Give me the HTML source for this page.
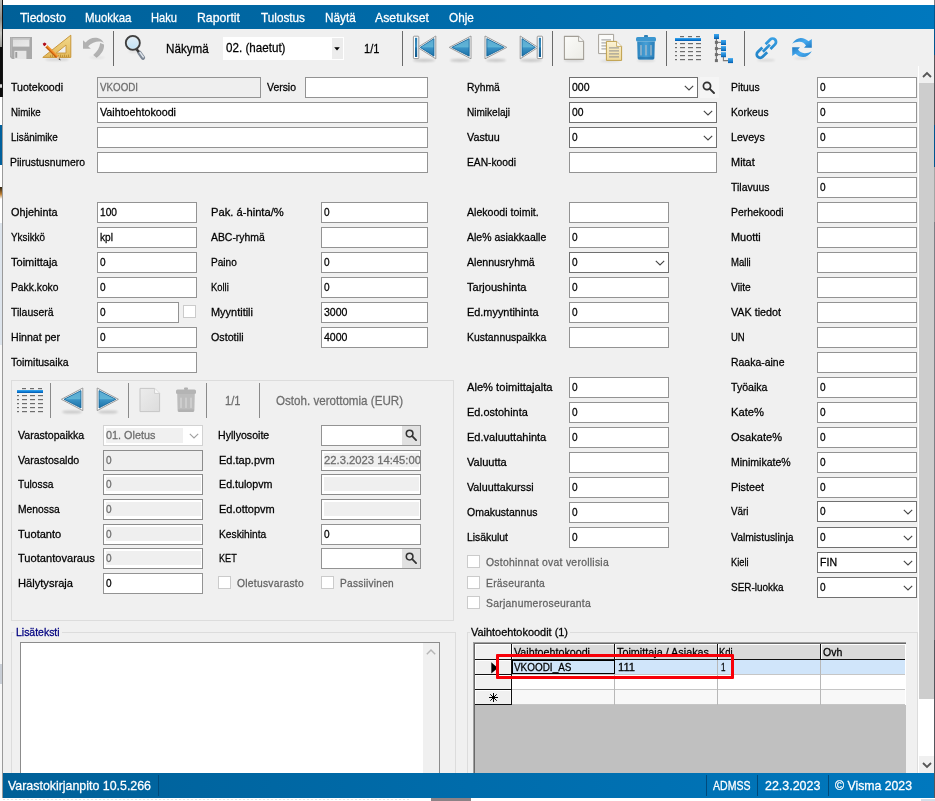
<!DOCTYPE html>
<html><head><meta charset="utf-8"><title>Varastokirjanpito</title>
<style>
html,body{margin:0;padding:0;background:#fff;}
body{width:935px;height:801px;overflow:hidden;position:relative;font-family:"Liberation Sans", sans-serif;}
#r{position:absolute;left:0;top:0;width:935px;height:801px;overflow:hidden;}
#r div,#r svg,#r span.t{position:absolute;}
span.t{white-space:nowrap;transform-origin:0 50%;display:block;-webkit-text-stroke:0.28px currentColor;}
</style></head><body><div id="r">
<div style="left:0px;top:0px;width:935px;height:801px;background:#fff"></div>
<div style="left:0px;top:0px;width:3px;height:47px;background:linear-gradient(#b9b9b5,#8e8e8a 40%,#c9c9c5 70%,#9a9a96)"></div>
<div style="left:0px;top:47px;width:3px;height:50px;background:#0c0c0c"></div>
<div style="left:0px;top:84px;width:2px;height:4px;background:#d8d8d8;border-radius:1px"></div>
<div style="left:0px;top:125px;width:3px;height:40px;background:#00609c"></div>
<div style="left:0px;top:187px;width:3px;height:12px;background:linear-gradient(#2a2010,#c08030 60%,#fff)"></div>
<div style="left:0px;top:223px;width:3px;height:122px;background:#dde4ec"></div>
<div style="left:0px;top:345px;width:3px;height:453px;background:#f7f7f7"></div>
<div style="left:0px;top:664px;width:3px;height:20px;background:#c9ced6"></div>
<div style="left:2px;top:0px;width:1px;height:798px;background:#9a9a9a"></div>
<div style="left:2px;top:0px;width:1px;height:97px;background:#141414"></div>
<div style="left:3px;top:29px;width:931px;height:744px;background:#f0f0f0"></div>
<div style="left:934px;top:0px;width:1px;height:798px;background:#7e7e84"></div>
<div style="left:934px;top:5px;width:1px;height:50px;background:#00568f"></div>
<div style="left:934px;top:55px;width:1px;height:70px;background:#55555a"></div>
<div style="left:934px;top:125px;width:1px;height:42px;background:#00568f"></div>
<div style="left:934px;top:167px;width:1px;height:55px;background:#a4a4a4"></div>
<div style="left:934px;top:640px;width:1px;height:158px;background:#55555c"></div>
<div style="left:3px;top:5px;width:931px;height:24px;background:linear-gradient(90deg,#006098,#0078be)"></div>
<span class="t" id="t1" style="left:19.5px;top:6px;height:24px;line-height:24px;font-size:13.5px;color:#fff;transform:scaleX(0.8970);">Tiedosto</span>
<span class="t" id="t2" style="left:85.3px;top:6px;height:24px;line-height:24px;font-size:13.5px;color:#fff;transform:scaleX(0.8488);">Muokkaa</span>
<span class="t" id="t3" style="left:151px;top:6px;height:24px;line-height:24px;font-size:13.5px;color:#fff;transform:scaleX(0.8250);">Haku</span>
<span class="t" id="t4" style="left:197px;top:6px;height:24px;line-height:24px;font-size:13.5px;color:#fff;transform:scaleX(0.9095);">Raportit</span>
<span class="t" id="t5" style="left:261px;top:6px;height:24px;line-height:24px;font-size:13.5px;color:#fff;transform:scaleX(0.8707);">Tulostus</span>
<span class="t" id="t6" style="left:324.5px;top:6px;height:24px;line-height:24px;font-size:13.5px;color:#fff;transform:scaleX(0.8702);">Näytä</span>
<span class="t" id="t7" style="left:374.8px;top:6px;height:24px;line-height:24px;font-size:13.5px;color:#fff;transform:scaleX(0.9109);">Asetukset</span>
<span class="t" id="t8" style="left:448.6px;top:6px;height:24px;line-height:24px;font-size:13.5px;color:#fff;transform:scaleX(0.8692);">Ohje</span>
<div style="left:113px;top:31px;width:1px;height:35px;background:#6a6a6a"></div>
<div style="left:402px;top:31px;width:1px;height:35px;background:#6a6a6a"></div>
<div style="left:552px;top:31px;width:1px;height:35px;background:#6a6a6a"></div>
<div style="left:666px;top:31px;width:1px;height:35px;background:#6a6a6a"></div>
<div style="left:744px;top:31px;width:1px;height:35px;background:#6a6a6a"></div>
<span class="t" id="t9" style="left:165.5px;top:37px;height:23px;line-height:23px;font-size:13.5px;color:#000;transform:scaleX(0.8644);">Näkymä</span>
<div style="left:223px;top:37px;width:121px;height:23px;background:#fff"></div>
<div style="left:332px;top:38px;width:11px;height:21px;background:#ececec"></div>
<svg style="left:334.3px;top:46.8px" width="6" height="4" viewBox="0 0 6 4"><path d="M0.2 0.3h5.6L3 3.4z" fill="#000"/></svg>
<span class="t" id="t10" style="left:226px;top:37px;height:22px;line-height:22px;font-size:13.5px;color:#000;transform:scaleX(0.8617);">02. (haetut)</span>
<span class="t" id="t11" style="left:364px;top:37px;height:23px;line-height:23px;font-size:13.5px;color:#000;transform:scaleX(0.8200);">1/1</span>
<svg style="left:0;top:0" width="935" height="801" viewBox="0 0 935 801"><defs>
<linearGradient id="bl" x1="0" y1="0" x2="0" y2="1"><stop offset="0" stop-color="#5aa9d2"/><stop offset="0.48" stop-color="#5fb4d6"/><stop offset="0.52" stop-color="#3a93c6"/><stop offset="1" stop-color="#1c72a8"/></linearGradient>
<linearGradient id="bl2" x1="0" y1="0" x2="0" y2="1"><stop offset="0" stop-color="#2a7cb0"/><stop offset="0.48" stop-color="#3a8fc0"/><stop offset="0.52" stop-color="#1f70a4"/><stop offset="1" stop-color="#115a8e"/></linearGradient>
<linearGradient id="bar" x1="0" y1="0" x2="0" y2="1"><stop offset="0" stop-color="#3aa8f0"/><stop offset="0.6" stop-color="#0a78d0"/><stop offset="1" stop-color="#0058b0"/></linearGradient>
<linearGradient id="sq" x1="0" y1="0" x2="0" y2="1"><stop offset="0" stop-color="#3fa8ee"/><stop offset="0.65" stop-color="#1a80d0"/><stop offset="1" stop-color="#0058a8"/></linearGradient>
<linearGradient id="gold" x1="0" y1="0" x2="0" y2="1"><stop offset="0" stop-color="#f3da8c"/><stop offset="1" stop-color="#e2b85a"/></linearGradient>
<linearGradient id="paper" x1="0" y1="0" x2="1" y2="1"><stop offset="0" stop-color="#fbfbf9"/><stop offset="1" stop-color="#ecece6"/></linearGradient>
<linearGradient id="gpaper" x1="0" y1="0" x2="1" y2="1"><stop offset="0" stop-color="#ececec"/><stop offset="1" stop-color="#dcdcdc"/></linearGradient>
<linearGradient id="ypaper" x1="0" y1="0" x2="0" y2="1"><stop offset="0" stop-color="#fbf3d6"/><stop offset="1" stop-color="#efd99a"/></linearGradient>
<linearGradient id="lens" x1="0" y1="0" x2="0" y2="1"><stop offset="0" stop-color="#e4eef6"/><stop offset="1" stop-color="#bfe2f6"/></linearGradient>
<linearGradient id="trb" x1="0" y1="0" x2="1" y2="0"><stop offset="0" stop-color="#2e86c0"/><stop offset="0.5" stop-color="#469fd6"/><stop offset="1" stop-color="#2a7eb8"/></linearGradient>
<linearGradient id="fl" x1="0" y1="0" x2="1" y2="1"><stop offset="0" stop-color="#dcdcdc"/><stop offset="1" stop-color="#ebebeb"/></linearGradient>
<linearGradient id="rf" x1="0" y1="0" x2="1" y2="1"><stop offset="0" stop-color="#2a86cc"/><stop offset="0.5" stop-color="#46aaf0"/><stop offset="1" stop-color="#1f78c0"/></linearGradient>
<linearGradient id="lk" gradientUnits="userSpaceOnUse" x1="8" y1="-8" x2="-8" y2="8"><stop offset="0" stop-color="#3aa2e6"/><stop offset="0.5" stop-color="#2a8ed2"/><stop offset="1" stop-color="#2384c8"/></linearGradient>
<filter id="blur" x="-50%" y="-200%" width="200%" height="500%"><feGaussianBlur stdDeviation="1.1"/></filter>
</defs><path d="M10 37H32V59H12L10 57Z" fill="#a9a9a9"/><rect x="10.6" y="37.4" width="1.4" height="19" fill="#b6b6b6"/><rect x="12.8" y="38" width="16.6" height="8.6" fill="url(#fl)"/><rect x="12.8" y="38" width="16.6" height="1.8" fill="#c4c4c4"/><rect x="14.4" y="50.8" width="12" height="8.2" fill="#e6e6e6"/><rect x="15.3" y="52" width="1.9" height="5.8" fill="#9c9c9c"/><ellipse cx="57" cy="59.5" rx="12" ry="1.3" fill="#000" opacity="0.12" filter="url(#blur)"/><path d="M42.8 57.4L70.8 35.2V57.4Z" fill="url(#gold)" stroke="#c8963a" stroke-width="1" stroke-linejoin="round"/><path d="M56.2 53L66 45V53Z" fill="#f0f0f0" stroke="#c8963a" stroke-width="0.9" stroke-linejoin="round"/><rect x="50" y="55.2" width="0.8" height="1.8" fill="#b88a30"/><rect x="52" y="54.6" width="0.8" height="2.4" fill="#b88a30"/><rect x="54" y="55.2" width="0.8" height="1.8" fill="#b88a30"/><rect x="56" y="54.6" width="0.8" height="2.4" fill="#b88a30"/><rect x="58" y="55.2" width="0.8" height="1.8" fill="#b88a30"/><rect x="60" y="54.6" width="0.8" height="2.4" fill="#b88a30"/><rect x="62" y="55.2" width="0.8" height="1.8" fill="#b88a30"/><rect x="64" y="54.6" width="0.8" height="2.4" fill="#b88a30"/><rect x="66" y="55.2" width="0.8" height="1.8" fill="#b88a30"/><rect x="68" y="54.6" width="0.8" height="2.4" fill="#b88a30"/><g transform="translate(43.5,43.2) rotate(45)"><rect x="0" y="-1.5" width="3.4" height="3" rx="1.3" fill="#b0101e"/><rect x="3" y="-1.45" width="1.3" height="2.9" fill="#fff6f0"/><rect x="4.2" y="-1.45" width="15.4" height="2.9" fill="#e67a18"/><rect x="4.2" y="-1.45" width="15.4" height="0.9" fill="#f7a848"/><rect x="4.2" y="0.65" width="15.4" height="0.8" fill="#b4520c"/><path d="M19.6 -1.45L23 0L19.6 1.45Z" fill="#e9c79a"/><path d="M22 -0.75L24.4 0L22 0.75Z" fill="#2c2c2c"/></g><path d="M83 40.2V48.8H90.8L88.2 46.2C91 43.6 95.5 41.6 99 41.6C101.4 41.6 103 42.2 103.9 43.2C102.4 39.6 98.6 37.8 95 37.8C91.4 37.8 88 39.6 85.6 42.6Z" fill="#b1b1b1"/><path d="M100.2 43L104 44.4C104.6 49.6 101 54.6 96.6 57.8L93.2 55C97.2 51.6 99.8 47.6 100.2 43Z" fill="#b1b1b1"/><ellipse cx="97" cy="57.6" rx="8" ry="0.9" fill="#000" opacity="0.08" filter="url(#blur)"/><ellipse cx="134" cy="51.6" rx="6" ry="0.8" fill="#000" opacity="0.1" filter="url(#blur)"/><path d="M139.4 52.8L143 57.8" stroke="#7d8794" stroke-width="4.3" stroke-linecap="round"/><path d="M139.9 52.4L143.3 57" stroke="#dfe5ec" stroke-width="1.5" stroke-linecap="round"/><path d="M136.6 49.2L138.8 52" stroke="#3a3a3a" stroke-width="2.6"/><circle cx="132.8" cy="42.9" r="6.95" fill="url(#lens)" stroke="#3f3f3f" stroke-width="2"/><circle cx="132.8" cy="42.9" r="5.7" fill="none" stroke="#f4f8fb" stroke-width="0.6" opacity="0.7"/><ellipse cx="424" cy="60.4" rx="11" ry="1.6" fill="#000" opacity="0.16" filter="url(#blur)"/><ellipse cx="460" cy="60.4" rx="10" ry="1.6" fill="#000" opacity="0.16" filter="url(#blur)"/><ellipse cx="496" cy="60.4" rx="10" ry="1.6" fill="#000" opacity="0.16" filter="url(#blur)"/><ellipse cx="531" cy="60.4" rx="11" ry="1.6" fill="#000" opacity="0.16" filter="url(#blur)"/><path d="M417.6 47.4L435.8 36.0V58.8Z" fill="#fff" stroke="#9a9a9a" stroke-width="1" stroke-linejoin="round"/><path d="M420.20000000000005 47.4L434.0 38.6V56.199999999999996Z" fill="url(#bl)" stroke="#0f5f94" stroke-width="0.8" stroke-linejoin="round"/><rect x="413.4" y="36.2" width="5.400000000000034" height="22.4" rx="0.8" fill="#fff" stroke="#9a9a9a" stroke-width="1"/><rect x="415.0" y="37.800000000000004" width="2.200000000000034" height="19.2" fill="url(#bl2)"/><path d="M449.2 47.4L471 36.0V58.8Z" fill="#fff" stroke="#9a9a9a" stroke-width="1" stroke-linejoin="round"/><path d="M451.8 47.4L469.2 38.6V56.199999999999996Z" fill="url(#bl)" stroke="#0f5f94" stroke-width="0.8" stroke-linejoin="round"/><path d="M506.8 47.4L485 36.0V58.8Z" fill="#fff" stroke="#9a9a9a" stroke-width="1" stroke-linejoin="round"/><path d="M504.2 47.4L486.8 38.6V56.199999999999996Z" fill="url(#bl)" stroke="#0f5f94" stroke-width="0.8" stroke-linejoin="round"/><path d="M538 47.4L520.2 36.0V58.8Z" fill="#fff" stroke="#9a9a9a" stroke-width="1" stroke-linejoin="round"/><path d="M535.4 47.4L522.0 38.6V56.199999999999996Z" fill="url(#bl)" stroke="#0f5f94" stroke-width="0.8" stroke-linejoin="round"/><rect x="537.2" y="36.2" width="5.399999999999977" height="22.4" rx="0.8" fill="#fff" stroke="#9a9a9a" stroke-width="1"/><rect x="538.8000000000001" y="37.800000000000004" width="2.199999999999977" height="19.2" fill="url(#bl2)"/><ellipse cx="574" cy="60.4" rx="10" ry="1.2" fill="#000" opacity="0.14" filter="url(#blur)"/><path d="M564.4 36.4H578.6L583.6 41.4V59.4H564.4Z" fill="url(#paper)" stroke="#a29e96" stroke-width="1.1" stroke-linejoin="round"/><path d="M578.6 36.4V41.4H583.6" fill="#fafafa" stroke="#a29e96" stroke-width="0.8800000000000001" stroke-linejoin="round"/><ellipse cx="610" cy="61" rx="10" ry="1.2" fill="#000" opacity="0.1" filter="url(#blur)"/><path d="M598.6 34.4H613.59L613.6 34.41V53.599999999999994H598.6Z" fill="#fbfbf9" stroke="#a6a29a" stroke-width="1" stroke-linejoin="round"/><path d="M613.59 34.4V34.41H613.6" fill="#fafafa" stroke="#a6a29a" stroke-width="0.8" stroke-linejoin="round"/><rect x="601.4" y="39.4" width="9.6" height="1" fill="#9a9a9a"/><rect x="601.4" y="42.4" width="9.6" height="1" fill="#9a9a9a"/><rect x="601.4" y="45.4" width="9.6" height="1" fill="#9a9a9a"/><rect x="601.4" y="48.4" width="9.6" height="1" fill="#9a9a9a"/><path d="M606.4 41.4H616.6L621.6 46.4V60.4H606.4Z" fill="url(#ypaper)" stroke="#bf9f4c" stroke-width="1" stroke-linejoin="round"/><path d="M616.6 41.4V46.4H621.6" fill="#fafafa" stroke="#bf9f4c" stroke-width="0.8" stroke-linejoin="round"/><rect x="609" y="47.4" width="10" height="1" fill="#8f8f8f"/><rect x="609" y="50.4" width="10" height="1" fill="#8f8f8f"/><rect x="609" y="53.4" width="10" height="1" fill="#8f8f8f"/><rect x="609" y="56.4" width="10" height="1" fill="#8f8f8f"/><ellipse cx="646" cy="60.4" rx="9" ry="1.2" fill="#000" opacity="0.12" filter="url(#blur)"/><rect x="644" y="35" width="4" height="2.5" rx="1" fill="#2f7fb4"/><path d="M637.2 41.5L637.6 58Q637.6 59.6 639.2 59.6H652.8Q654.4 59.6 654.4 58L654.8 41.5Z" fill="url(#trb)"/><path d="M638 57Q638 59.6 639.5 59.6H652.5Q654 59.6 654 57Z" fill="#1f6ea6" opacity="0.6"/><rect x="636" y="37" width="20" height="4.6" rx="1.6" fill="#3c97d0"/><rect x="640.35" y="45" width="1.3" height="10.6" rx="0.6" fill="#a7bccb"/><rect x="645.35" y="45" width="1.3" height="10.6" rx="0.6" fill="#a7bccb"/><rect x="650.35" y="45" width="1.3" height="10.6" rx="0.6" fill="#a7bccb"/><rect x="680" y="36" width="4" height="1.2" fill="#6e6e6e"/><rect x="688" y="36" width="4" height="1.2" fill="#6e6e6e"/><rect x="696" y="36" width="4" height="1.2" fill="#6e6e6e"/><rect x="675" y="38" width="26" height="3" fill="url(#bar)"/><rect x="675" y="43" width="2" height="1.2" fill="#6e6e6e"/><rect x="680" y="43" width="5" height="1.2" fill="#6e6e6e"/><rect x="688" y="43" width="5" height="1.2" fill="#6e6e6e"/><rect x="696" y="43" width="5" height="1.2" fill="#6e6e6e"/><rect x="675" y="47" width="2" height="1.2" fill="#6e6e6e"/><rect x="680" y="47" width="5" height="1.2" fill="#6e6e6e"/><rect x="688" y="47" width="5" height="1.2" fill="#6e6e6e"/><rect x="696" y="47" width="5" height="1.2" fill="#6e6e6e"/><rect x="675" y="51" width="2" height="1.2" fill="#6e6e6e"/><rect x="680" y="51" width="5" height="1.2" fill="#6e6e6e"/><rect x="688" y="51" width="5" height="1.2" fill="#6e6e6e"/><rect x="696" y="51" width="5" height="1.2" fill="#6e6e6e"/><rect x="675" y="55" width="2" height="1.2" fill="#6e6e6e"/><rect x="680" y="55" width="5" height="1.2" fill="#6e6e6e"/><rect x="688" y="55" width="5" height="1.2" fill="#6e6e6e"/><rect x="696" y="55" width="5" height="1.2" fill="#6e6e6e"/><rect x="675" y="59" width="2" height="1.2" fill="#6e6e6e"/><rect x="680" y="59" width="5" height="1.2" fill="#6e6e6e"/><rect x="688" y="59" width="5" height="1.2" fill="#6e6e6e"/><rect x="696" y="59" width="5" height="1.2" fill="#6e6e6e"/><path d="M716.4 38.6V61" stroke="#7a7a7a" stroke-width="1.2"/><path d="M716.4 42.4H722" stroke="#7a7a7a" stroke-width="1.1"/><path d="M716.4 48.6H722" stroke="#7a7a7a" stroke-width="1.1"/><path d="M716.4 54.6H722" stroke="#7a7a7a" stroke-width="1.1"/><path d="M723.4 56.8V60.6H729" stroke="#7a7a7a" stroke-width="1.1" fill="none"/><rect x="714.9" y="40.9" width="3" height="3" fill="#6e6e6e"/><rect x="714.9" y="47.1" width="3" height="3" fill="#6e6e6e"/><rect x="714.9" y="53.1" width="3" height="3" fill="#6e6e6e"/><rect x="714.9" y="59.1" width="3" height="3" fill="#6e6e6e"/><rect x="714" y="34" width="5" height="5" fill="url(#sq)"/><rect x="721" y="40" width="5" height="5" fill="url(#sq)"/><rect x="721" y="46.1" width="5" height="5" fill="url(#sq)"/><rect x="721" y="52.2" width="5" height="5" fill="url(#sq)"/><rect x="728" y="58.1" width="5" height="5" fill="url(#sq)"/><ellipse cx="766" cy="60.2" rx="9" ry="1.0" fill="#000" opacity="0.12" filter="url(#blur)"/><g transform="translate(766.4,48.2) rotate(-45)" fill="none" stroke="url(#lk)" stroke-width="2.8" stroke-linecap="butt"><path d="M2.3 -3.4H8.8A3.4 3.4 0 0 1 8.8 3.4H2.3"/><path d="M-2.3 3.4H-8.8A3.4 3.4 0 0 1 -8.8 -3.4H-2.3"/><path d="M-5 0H5" stroke-width="2.6"/></g><ellipse cx="802" cy="58.4" rx="8" ry="0.9" fill="#000" opacity="0.1" filter="url(#blur)"/><path d="M792.2 43.7C794.5 40 797.5 37.9 800.8 37.9C803.8 37.9 806.5 39.2 808.5 41.2L811.8 39V47.8H804L806 45.4C804.5 43.3 802.5 42 799.5 41.8C797 41.7 794.5 42.4 792.2 43.7Z" fill="url(#rf)"/><path d="M792.2 43.7C794.5 40 797.5 37.9 800.8 37.9C803.8 37.9 806.5 39.2 808.5 41.2L811.8 39V47.8H804L806 45.4C804.5 43.3 802.5 42 799.5 41.8C797 41.7 794.5 42.4 792.2 43.7Z" fill="url(#rf)" transform="rotate(180 802 47.5)"/></svg>
<span class="t" id="t12" style="left:10.5px;top:77px;height:21px;line-height:21px;font-size:11.5px;color:#000;transform:scaleX(0.9206);">Tuotekoodi</span>
<span class="t" id="t13" style="left:10.5px;top:102px;height:21px;line-height:21px;font-size:11.5px;color:#000;transform:scaleX(0.8452);">Nimike</span>
<span class="t" id="t14" style="left:10.5px;top:127px;height:21px;line-height:21px;font-size:11.5px;color:#000;transform:scaleX(0.8614);">Lisänimike</span>
<span class="t" id="t15" style="left:9.5px;top:152px;height:21px;line-height:21px;font-size:11.5px;color:#000;transform:scaleX(0.9026);">Piirustusnumero</span>
<div style="left:97px;top:77px;width:164px;height:21px;background:#efefef;border:1px solid #939393;box-sizing:border-box"></div>
<span class="t" id="t16" style="left:100px;top:77px;height:21px;line-height:21px;font-size:11.5px;color:#6d6d6d;transform:scaleX(0.8495);">VKOODI</span>
<span class="t" id="t17" style="left:267px;top:77px;height:21px;line-height:21px;font-size:11.5px;color:#000;transform:scaleX(0.9071);">Versio</span>
<div style="left:305px;top:77px;width:123px;height:21px;background:#fff;border:1px solid #939393;box-sizing:border-box"></div>
<div style="left:97px;top:102px;width:331px;height:21px;background:#fff;border:1px solid #939393;box-sizing:border-box"></div>
<span class="t" id="t18" style="left:100px;top:102px;height:21px;line-height:21px;font-size:11.5px;color:#000;transform:scaleX(0.9309);">Vaihtoehtokoodi</span>
<div style="left:97px;top:127px;width:331px;height:21px;background:#fff;border:1px solid #939393;box-sizing:border-box"></div>
<div style="left:97px;top:152px;width:331px;height:21px;background:#fff;border:1px solid #939393;box-sizing:border-box"></div>
<span class="t" id="t19" style="left:10.5px;top:202px;height:21px;line-height:21px;font-size:11.5px;color:#000;transform:scaleX(0.9445);">Ohjehinta</span>
<div style="left:97px;top:202px;width:100px;height:21px;background:#fff;border:1px solid #939393;box-sizing:border-box"></div>
<span class="t" id="t20" style="left:100px;top:202px;height:21px;line-height:21px;font-size:11.5px;color:#000;transform:scaleX(0.8860);">100</span>
<span class="t" id="t21" style="left:10.5px;top:227px;height:21px;line-height:21px;font-size:11.5px;color:#000;transform:scaleX(0.8580);">Yksikkö</span>
<div style="left:97px;top:227px;width:100px;height:21px;background:#fff;border:1px solid #939393;box-sizing:border-box"></div>
<span class="t" id="t22" style="left:100px;top:227px;height:21px;line-height:21px;font-size:11.5px;color:#000;transform:scaleX(0.8842);">kpl</span>
<span class="t" id="t23" style="left:10.5px;top:252px;height:21px;line-height:21px;font-size:11.5px;color:#000;transform:scaleX(0.9572);">Toimittaja</span>
<div style="left:97px;top:252px;width:100px;height:21px;background:#fff;border:1px solid #939393;box-sizing:border-box"></div>
<span class="t" id="t24" style="left:100px;top:252px;height:21px;line-height:21px;font-size:11.5px;color:#000;transform:scaleX(0.8741);">0</span>
<span class="t" id="t25" style="left:10.5px;top:277px;height:21px;line-height:21px;font-size:11.5px;color:#000;transform:scaleX(0.8952);">Pakk.koko</span>
<div style="left:97px;top:277px;width:100px;height:21px;background:#fff;border:1px solid #939393;box-sizing:border-box"></div>
<span class="t" id="t26" style="left:100px;top:277px;height:21px;line-height:21px;font-size:11.5px;color:#000;transform:scaleX(0.8741);">0</span>
<span class="t" id="t27" style="left:10.5px;top:302px;height:21px;line-height:21px;font-size:11.5px;color:#000;transform:scaleX(0.9067);">Tilauserä</span>
<div style="left:97px;top:302px;width:82px;height:21px;background:#fff;border:1px solid #939393;box-sizing:border-box"></div>
<span class="t" id="t28" style="left:100px;top:302px;height:21px;line-height:21px;font-size:11.5px;color:#000;transform:scaleX(0.8741);">0</span>
<div style="left:183px;top:305px;width:13px;height:13px;background:#fff;border:1px solid #cbcbcb;box-sizing:border-box"></div>
<span class="t" id="t29" style="left:10.5px;top:327px;height:21px;line-height:21px;font-size:11.5px;color:#000;transform:scaleX(0.9234);">Hinnat per</span>
<div style="left:97px;top:327px;width:100px;height:21px;background:#fff;border:1px solid #939393;box-sizing:border-box"></div>
<span class="t" id="t30" style="left:100px;top:327px;height:21px;line-height:21px;font-size:11.5px;color:#000;transform:scaleX(0.8741);">0</span>
<span class="t" id="t31" style="left:10.5px;top:352px;height:21px;line-height:21px;font-size:11.5px;color:#000;transform:scaleX(0.9086);">Toimitusaika</span>
<div style="left:97px;top:352px;width:100px;height:21px;background:#fff;border:1px solid #939393;box-sizing:border-box"></div>
<span class="t" id="t32" style="left:210.5px;top:202px;height:21px;line-height:21px;font-size:11.5px;color:#000;transform:scaleX(0.9726);">Pak. á-hinta/%</span>
<div style="left:321px;top:202px;width:107px;height:21px;background:#fff;border:1px solid #939393;box-sizing:border-box"></div>
<span class="t" id="t33" style="left:324px;top:202px;height:21px;line-height:21px;font-size:11.5px;color:#000;transform:scaleX(0.8741);">0</span>
<span class="t" id="t34" style="left:210.5px;top:227px;height:21px;line-height:21px;font-size:11.5px;color:#000;transform:scaleX(0.9043);">ABC-ryhmä</span>
<div style="left:321px;top:227px;width:107px;height:21px;background:#fff;border:1px solid #939393;box-sizing:border-box"></div>
<span class="t" id="t35" style="left:210.5px;top:252px;height:21px;line-height:21px;font-size:11.5px;color:#000;transform:scaleX(0.8752);">Paino</span>
<div style="left:321px;top:252px;width:107px;height:21px;background:#fff;border:1px solid #939393;box-sizing:border-box"></div>
<span class="t" id="t36" style="left:324px;top:252px;height:21px;line-height:21px;font-size:11.5px;color:#000;transform:scaleX(0.8741);">0</span>
<span class="t" id="t37" style="left:210.5px;top:277px;height:21px;line-height:21px;font-size:11.5px;color:#000;transform:scaleX(0.8167);">Kolli</span>
<div style="left:321px;top:277px;width:107px;height:21px;background:#fff;border:1px solid #939393;box-sizing:border-box"></div>
<span class="t" id="t38" style="left:324px;top:277px;height:21px;line-height:21px;font-size:11.5px;color:#000;transform:scaleX(0.8741);">0</span>
<span class="t" id="t39" style="left:210.5px;top:302px;height:21px;line-height:21px;font-size:11.5px;color:#000;transform:scaleX(0.9525);">Myyntitili</span>
<div style="left:321px;top:302px;width:107px;height:21px;background:#fff;border:1px solid #939393;box-sizing:border-box"></div>
<span class="t" id="t40" style="left:324px;top:302px;height:21px;line-height:21px;font-size:11.5px;color:#000;transform:scaleX(0.9182);">3000</span>
<span class="t" id="t41" style="left:210.5px;top:327px;height:21px;line-height:21px;font-size:11.5px;color:#000;transform:scaleX(0.9316);">Ostotili</span>
<div style="left:321px;top:327px;width:107px;height:21px;background:#fff;border:1px solid #939393;box-sizing:border-box"></div>
<span class="t" id="t42" style="left:324px;top:327px;height:21px;line-height:21px;font-size:11.5px;color:#000;transform:scaleX(0.9182);">4000</span>
<span class="t" id="t43" style="left:466.5px;top:77px;height:21px;line-height:21px;font-size:11.5px;color:#000;transform:scaleX(0.8988);">Ryhmä</span>
<div style="left:569px;top:77px;width:129px;height:21px;background:#fff;border:1px solid #707070;box-sizing:border-box"></div>
<span class="t" id="t44" style="left:572px;top:77px;height:21px;line-height:21px;font-size:11.5px;color:#000;transform:scaleX(0.9121);">000</span>
<svg style="left:684px;top:85.0px" width="10" height="6" viewBox="0 0 10 6"><path d="M0.8 0.8L5 5l4.2-4.2" fill="none" stroke="#444" stroke-width="1.1"/></svg>
<div style="left:700px;top:77px;width:19px;height:21px;background:#f5f5f5"></div>
<svg style="left:702.4px;top:81.2px" width="13" height="13" viewBox="0 0 13 13"><circle cx="5" cy="5" r="3.6" fill="none" stroke="#333" stroke-width="1.7"/><path d="M7.8 7.8L12 12" stroke="#333" stroke-width="1.9" stroke-linecap="round"/></svg>
<span class="t" id="t45" style="left:466.5px;top:102px;height:21px;line-height:21px;font-size:11.5px;color:#000;transform:scaleX(0.8739);">Nimikelaji</span>
<div style="left:569px;top:102px;width:148px;height:21px;background:#fff;border:1px solid #707070;box-sizing:border-box"></div>
<span class="t" id="t46" style="left:572px;top:102px;height:21px;line-height:21px;font-size:11.5px;color:#000;transform:scaleX(0.8987);">00</span>
<svg style="left:703px;top:110.0px" width="10" height="6" viewBox="0 0 10 6"><path d="M0.8 0.8L5 5l4.2-4.2" fill="none" stroke="#444" stroke-width="1.1"/></svg>
<span class="t" id="t47" style="left:466.5px;top:127px;height:21px;line-height:21px;font-size:11.5px;color:#000;transform:scaleX(0.9370);">Vastuu</span>
<div style="left:569px;top:127px;width:148px;height:21px;background:#fff;border:1px solid #707070;box-sizing:border-box"></div>
<span class="t" id="t48" style="left:572px;top:127px;height:21px;line-height:21px;font-size:11.5px;color:#000;transform:scaleX(0.8741);">0</span>
<svg style="left:703px;top:135.0px" width="10" height="6" viewBox="0 0 10 6"><path d="M0.8 0.8L5 5l4.2-4.2" fill="none" stroke="#444" stroke-width="1.1"/></svg>
<span class="t" id="t49" style="left:466.5px;top:152px;height:21px;line-height:21px;font-size:11.5px;color:#000;transform:scaleX(0.8914);">EAN-koodi</span>
<div style="left:569px;top:152px;width:148px;height:21px;background:#fff;border:1px solid #939393;box-sizing:border-box"></div>
<span class="t" id="t50" style="left:466.5px;top:202px;height:21px;line-height:21px;font-size:11.5px;color:#000;transform:scaleX(0.9201);">Alekoodi toimit.</span>
<div style="left:569px;top:202px;width:100px;height:21px;background:#fff;border:1px solid #939393;box-sizing:border-box"></div>
<span class="t" id="t51" style="left:466.5px;top:227px;height:21px;line-height:21px;font-size:11.5px;color:#000;transform:scaleX(0.9116);">Ale% asiakkaalle</span>
<div style="left:569px;top:227px;width:100px;height:21px;background:#fff;border:1px solid #939393;box-sizing:border-box"></div>
<span class="t" id="t52" style="left:572px;top:227px;height:21px;line-height:21px;font-size:11.5px;color:#000;transform:scaleX(0.8741);">0</span>
<span class="t" id="t53" style="left:466.5px;top:252px;height:21px;line-height:21px;font-size:11.5px;color:#000;transform:scaleX(0.9216);">Alennusryhmä</span>
<div style="left:569px;top:252px;width:100px;height:21px;background:#fff;border:1px solid #707070;box-sizing:border-box"></div>
<span class="t" id="t54" style="left:572px;top:252px;height:21px;line-height:21px;font-size:11.5px;color:#000;transform:scaleX(0.8741);">0</span>
<svg style="left:655px;top:260.0px" width="10" height="6" viewBox="0 0 10 6"><path d="M0.8 0.8L5 5l4.2-4.2" fill="none" stroke="#444" stroke-width="1.1"/></svg>
<span class="t" id="t55" style="left:466.5px;top:277px;height:21px;line-height:21px;font-size:11.5px;color:#000;transform:scaleX(0.9594);">Tarjoushinta</span>
<div style="left:569px;top:277px;width:100px;height:21px;background:#fff;border:1px solid #939393;box-sizing:border-box"></div>
<span class="t" id="t56" style="left:572px;top:277px;height:21px;line-height:21px;font-size:11.5px;color:#000;transform:scaleX(0.8741);">0</span>
<span class="t" id="t57" style="left:466.5px;top:302px;height:21px;line-height:21px;font-size:11.5px;color:#000;transform:scaleX(0.9478);">Ed.myyntihinta</span>
<div style="left:569px;top:302px;width:100px;height:21px;background:#fff;border:1px solid #939393;box-sizing:border-box"></div>
<span class="t" id="t58" style="left:572px;top:302px;height:21px;line-height:21px;font-size:11.5px;color:#000;transform:scaleX(0.8741);">0</span>
<span class="t" id="t59" style="left:466.5px;top:327px;height:21px;line-height:21px;font-size:11.5px;color:#000;transform:scaleX(0.9047);">Kustannuspaikka</span>
<div style="left:569px;top:327px;width:100px;height:21px;background:#fff;border:1px solid #939393;box-sizing:border-box"></div>
<span class="t" id="t60" style="left:466.5px;top:377px;height:21px;line-height:21px;font-size:11.5px;color:#000;transform:scaleX(0.9692);">Ale% toimittajalta</span>
<div style="left:569px;top:377px;width:100px;height:21px;background:#fff;border:1px solid #939393;box-sizing:border-box"></div>
<span class="t" id="t61" style="left:572px;top:377px;height:21px;line-height:21px;font-size:11.5px;color:#000;transform:scaleX(0.8741);">0</span>
<span class="t" id="t62" style="left:466.5px;top:402px;height:21px;line-height:21px;font-size:11.5px;color:#000;transform:scaleX(0.9501);">Ed.ostohinta</span>
<div style="left:569px;top:402px;width:100px;height:21px;background:#fff;border:1px solid #939393;box-sizing:border-box"></div>
<span class="t" id="t63" style="left:572px;top:402px;height:21px;line-height:21px;font-size:11.5px;color:#000;transform:scaleX(0.8741);">0</span>
<span class="t" id="t64" style="left:466.5px;top:427px;height:21px;line-height:21px;font-size:11.5px;color:#000;transform:scaleX(0.9608);">Ed.valuuttahinta</span>
<div style="left:569px;top:427px;width:100px;height:21px;background:#fff;border:1px solid #939393;box-sizing:border-box"></div>
<span class="t" id="t65" style="left:572px;top:427px;height:21px;line-height:21px;font-size:11.5px;color:#000;transform:scaleX(0.8741);">0</span>
<span class="t" id="t66" style="left:466.5px;top:452px;height:21px;line-height:21px;font-size:11.5px;color:#000;transform:scaleX(0.9611);">Valuutta</span>
<div style="left:569px;top:452px;width:100px;height:21px;background:#fff;border:1px solid #939393;box-sizing:border-box"></div>
<span class="t" id="t67" style="left:466.5px;top:477px;height:21px;line-height:21px;font-size:11.5px;color:#000;transform:scaleX(0.9350);">Valuuttakurssi</span>
<div style="left:569px;top:477px;width:100px;height:21px;background:#fff;border:1px solid #939393;box-sizing:border-box"></div>
<span class="t" id="t68" style="left:572px;top:477px;height:21px;line-height:21px;font-size:11.5px;color:#000;transform:scaleX(0.8741);">0</span>
<span class="t" id="t69" style="left:466.5px;top:502px;height:21px;line-height:21px;font-size:11.5px;color:#000;transform:scaleX(0.9113);">Omakustannus</span>
<div style="left:569px;top:502px;width:100px;height:21px;background:#fff;border:1px solid #939393;box-sizing:border-box"></div>
<span class="t" id="t70" style="left:572px;top:502px;height:21px;line-height:21px;font-size:11.5px;color:#000;transform:scaleX(0.8741);">0</span>
<span class="t" id="t71" style="left:466.5px;top:527px;height:21px;line-height:21px;font-size:11.5px;color:#000;transform:scaleX(0.9033);">Lisäkulut</span>
<div style="left:569px;top:527px;width:100px;height:21px;background:#fff;border:1px solid #939393;box-sizing:border-box"></div>
<span class="t" id="t72" style="left:572px;top:527px;height:21px;line-height:21px;font-size:11.5px;color:#000;transform:scaleX(0.8741);">0</span>
<div style="left:467px;top:555px;width:13px;height:13px;background:#fff;border:1px solid #cbcbcb;box-sizing:border-box"></div>
<span class="t" id="t73" style="left:486px;top:551.8px;height:21px;line-height:21px;font-size:11.5px;color:#636363;transform:scaleX(0.9024);letter-spacing:0.3px;">Ostohinnat ovat verollisia</span>
<div style="left:467px;top:576px;width:13px;height:13px;background:#fff;border:1px solid #cbcbcb;box-sizing:border-box"></div>
<span class="t" id="t74" style="left:486px;top:572.8px;height:21px;line-height:21px;font-size:11.5px;color:#636363;transform:scaleX(0.8946);letter-spacing:0.3px;">Eräseuranta</span>
<div style="left:467px;top:596px;width:13px;height:13px;background:#fff;border:1px solid #cbcbcb;box-sizing:border-box"></div>
<span class="t" id="t75" style="left:486px;top:592.8px;height:21px;line-height:21px;font-size:11.5px;color:#636363;transform:scaleX(0.9029);letter-spacing:0.3px;">Sarjanumeroseuranta</span>
<span class="t" id="t76" style="left:730.5px;top:77px;height:21px;line-height:21px;font-size:11.5px;color:#000;transform:scaleX(0.8993);">Pituus</span>
<div style="left:817px;top:77px;width:100px;height:21px;background:#fff;border:1px solid #939393;box-sizing:border-box"></div>
<span class="t" id="t77" style="left:820px;top:77px;height:21px;line-height:21px;font-size:11.5px;color:#000;transform:scaleX(0.8741);">0</span>
<span class="t" id="t78" style="left:730.5px;top:102px;height:21px;line-height:21px;font-size:11.5px;color:#000;transform:scaleX(0.8889);">Korkeus</span>
<div style="left:817px;top:102px;width:100px;height:21px;background:#fff;border:1px solid #939393;box-sizing:border-box"></div>
<span class="t" id="t79" style="left:820px;top:102px;height:21px;line-height:21px;font-size:11.5px;color:#000;transform:scaleX(0.8741);">0</span>
<span class="t" id="t80" style="left:730.5px;top:127px;height:21px;line-height:21px;font-size:11.5px;color:#000;transform:scaleX(0.9262);">Leveys</span>
<div style="left:817px;top:127px;width:100px;height:21px;background:#fff;border:1px solid #939393;box-sizing:border-box"></div>
<span class="t" id="t81" style="left:820px;top:127px;height:21px;line-height:21px;font-size:11.5px;color:#000;transform:scaleX(0.8741);">0</span>
<span class="t" id="t82" style="left:730.5px;top:152px;height:21px;line-height:21px;font-size:11.5px;color:#000;transform:scaleX(0.9530);">Mitat</span>
<div style="left:817px;top:152px;width:100px;height:21px;background:#fff;border:1px solid #939393;box-sizing:border-box"></div>
<span class="t" id="t83" style="left:730.5px;top:177px;height:21px;line-height:21px;font-size:11.5px;color:#000;transform:scaleX(0.9079);">Tilavuus</span>
<div style="left:817px;top:177px;width:100px;height:21px;background:#fff;border:1px solid #939393;box-sizing:border-box"></div>
<span class="t" id="t84" style="left:820px;top:177px;height:21px;line-height:21px;font-size:11.5px;color:#000;transform:scaleX(0.8741);">0</span>
<span class="t" id="t85" style="left:730.5px;top:202px;height:21px;line-height:21px;font-size:11.5px;color:#000;transform:scaleX(0.9023);">Perhekoodi</span>
<div style="left:817px;top:202px;width:100px;height:21px;background:#fff;border:1px solid #939393;box-sizing:border-box"></div>
<span class="t" id="t86" style="left:730.5px;top:227px;height:21px;line-height:21px;font-size:11.5px;color:#000;transform:scaleX(0.9496);">Muotti</span>
<div style="left:817px;top:227px;width:100px;height:21px;background:#fff;border:1px solid #939393;box-sizing:border-box"></div>
<span class="t" id="t87" style="left:730.5px;top:252px;height:21px;line-height:21px;font-size:11.5px;color:#000;transform:scaleX(0.8354);">Malli</span>
<div style="left:817px;top:252px;width:100px;height:21px;background:#fff;border:1px solid #939393;box-sizing:border-box"></div>
<span class="t" id="t88" style="left:730.5px;top:277px;height:21px;line-height:21px;font-size:11.5px;color:#000;transform:scaleX(0.8908);">Viite</span>
<div style="left:817px;top:277px;width:100px;height:21px;background:#fff;border:1px solid #939393;box-sizing:border-box"></div>
<span class="t" id="t89" style="left:730.5px;top:302px;height:21px;line-height:21px;font-size:11.5px;color:#000;transform:scaleX(0.9346);">VAK tiedot</span>
<div style="left:817px;top:302px;width:100px;height:21px;background:#fff;border:1px solid #939393;box-sizing:border-box"></div>
<span class="t" id="t90" style="left:730.5px;top:327px;height:21px;line-height:21px;font-size:11.5px;color:#000;transform:scaleX(0.8271);">UN</span>
<div style="left:817px;top:327px;width:100px;height:21px;background:#fff;border:1px solid #939393;box-sizing:border-box"></div>
<span class="t" id="t91" style="left:730.5px;top:352px;height:21px;line-height:21px;font-size:11.5px;color:#000;transform:scaleX(0.9094);">Raaka-aine</span>
<div style="left:817px;top:352px;width:100px;height:21px;background:#fff;border:1px solid #939393;box-sizing:border-box"></div>
<span class="t" id="t92" style="left:730.5px;top:377px;height:21px;line-height:21px;font-size:11.5px;color:#000;transform:scaleX(0.9208);">Työaika</span>
<div style="left:817px;top:377px;width:100px;height:21px;background:#fff;border:1px solid #939393;box-sizing:border-box"></div>
<span class="t" id="t93" style="left:820px;top:377px;height:21px;line-height:21px;font-size:11.5px;color:#000;transform:scaleX(0.8741);">0</span>
<span class="t" id="t94" style="left:730.5px;top:402px;height:21px;line-height:21px;font-size:11.5px;color:#000;transform:scaleX(0.9737);">Kate%</span>
<div style="left:817px;top:402px;width:100px;height:21px;background:#fff;border:1px solid #939393;box-sizing:border-box"></div>
<span class="t" id="t95" style="left:820px;top:402px;height:21px;line-height:21px;font-size:11.5px;color:#000;transform:scaleX(0.8741);">0</span>
<span class="t" id="t96" style="left:730.5px;top:427px;height:21px;line-height:21px;font-size:11.5px;color:#000;transform:scaleX(0.9611);">Osakate%</span>
<div style="left:817px;top:427px;width:100px;height:21px;background:#fff;border:1px solid #939393;box-sizing:border-box"></div>
<span class="t" id="t97" style="left:820px;top:427px;height:21px;line-height:21px;font-size:11.5px;color:#000;transform:scaleX(0.8741);">0</span>
<span class="t" id="t98" style="left:730.5px;top:452px;height:21px;line-height:21px;font-size:11.5px;color:#000;transform:scaleX(0.9166);">Minimikate%</span>
<div style="left:817px;top:452px;width:100px;height:21px;background:#fff;border:1px solid #939393;box-sizing:border-box"></div>
<span class="t" id="t99" style="left:820px;top:452px;height:21px;line-height:21px;font-size:11.5px;color:#000;transform:scaleX(0.8741);">0</span>
<span class="t" id="t100" style="left:730.5px;top:477px;height:21px;line-height:21px;font-size:11.5px;color:#000;transform:scaleX(0.9382);">Pisteet</span>
<div style="left:817px;top:477px;width:100px;height:21px;background:#fff;border:1px solid #939393;box-sizing:border-box"></div>
<span class="t" id="t101" style="left:820px;top:477px;height:21px;line-height:21px;font-size:11.5px;color:#000;transform:scaleX(0.8741);">0</span>
<span class="t" id="t102" style="left:730.5px;top:501px;height:21px;line-height:21px;font-size:11.5px;color:#000;transform:scaleX(0.8556);">Väri</span>
<div style="left:817px;top:501px;width:100px;height:21px;background:#fff;border:1px solid #707070;box-sizing:border-box"></div>
<span class="t" id="t103" style="left:820px;top:501px;height:21px;line-height:21px;font-size:11.5px;color:#000;transform:scaleX(0.8741);">0</span>
<svg style="left:903px;top:509.0px" width="10" height="6" viewBox="0 0 10 6"><path d="M0.8 0.8L5 5l4.2-4.2" fill="none" stroke="#444" stroke-width="1.1"/></svg>
<span class="t" id="t104" style="left:730.5px;top:527px;height:21px;line-height:21px;font-size:11.5px;color:#000;transform:scaleX(0.8999);">Valmistuslinja</span>
<div style="left:817px;top:527px;width:100px;height:21px;background:#fff;border:1px solid #707070;box-sizing:border-box"></div>
<span class="t" id="t105" style="left:820px;top:527px;height:21px;line-height:21px;font-size:11.5px;color:#000;transform:scaleX(0.8741);">0</span>
<svg style="left:903px;top:535.0px" width="10" height="6" viewBox="0 0 10 6"><path d="M0.8 0.8L5 5l4.2-4.2" fill="none" stroke="#444" stroke-width="1.1"/></svg>
<span class="t" id="t106" style="left:730.5px;top:552px;height:21px;line-height:21px;font-size:11.5px;color:#000;transform:scaleX(0.8052);">Kieli</span>
<div style="left:817px;top:552px;width:100px;height:21px;background:#fff;border:1px solid #707070;box-sizing:border-box"></div>
<span class="t" id="t107" style="left:820px;top:552px;height:21px;line-height:21px;font-size:11.5px;color:#000;transform:scaleX(0.9174);">FIN</span>
<svg style="left:903px;top:560.0px" width="10" height="6" viewBox="0 0 10 6"><path d="M0.8 0.8L5 5l4.2-4.2" fill="none" stroke="#444" stroke-width="1.1"/></svg>
<span class="t" id="t108" style="left:730.5px;top:577px;height:21px;line-height:21px;font-size:11.5px;color:#000;transform:scaleX(0.8646);">SER-luokka</span>
<div style="left:817px;top:577px;width:100px;height:21px;background:#fff;border:1px solid #707070;box-sizing:border-box"></div>
<span class="t" id="t109" style="left:820px;top:577px;height:21px;line-height:21px;font-size:11.5px;color:#000;transform:scaleX(0.8741);">0</span>
<svg style="left:903px;top:585.0px" width="10" height="6" viewBox="0 0 10 6"><path d="M0.8 0.8L5 5l4.2-4.2" fill="none" stroke="#444" stroke-width="1.1"/></svg>
<div style="left:11px;top:380px;width:443px;height:241px;border:1px solid #dcdcdc;box-sizing:border-box"></div>
<div style="left:50px;top:383px;width:1px;height:35px;background:#8a8a8a"></div>
<div style="left:128px;top:383px;width:1px;height:35px;background:#8a8a8a"></div>
<div style="left:206px;top:383px;width:1px;height:35px;background:#8a8a8a"></div>
<div style="left:259px;top:383px;width:1px;height:35px;background:#8a8a8a"></div>
<span class="t" id="t110" style="left:224.5px;top:389px;height:23px;line-height:23px;font-size:13.5px;color:#6d6d6d;transform:scaleX(0.8253);">1/1</span>
<span class="t" id="t111" style="left:276px;top:389px;height:23px;line-height:23px;font-size:13.5px;color:#6d6d6d;transform:scaleX(0.8593);">Ostoh. verottomia (EUR)</span>
<svg style="left:0;top:0" width="935" height="801" viewBox="0 0 935 801"><rect x="22" y="388" width="4" height="1.2" fill="#6e6e6e"/><rect x="30" y="388" width="4" height="1.2" fill="#6e6e6e"/><rect x="38" y="388" width="4" height="1.2" fill="#6e6e6e"/><rect x="17" y="390" width="26" height="3" fill="url(#bar)"/><rect x="17" y="395" width="2" height="1.2" fill="#6e6e6e"/><rect x="22" y="395" width="5" height="1.2" fill="#6e6e6e"/><rect x="30" y="395" width="5" height="1.2" fill="#6e6e6e"/><rect x="38" y="395" width="5" height="1.2" fill="#6e6e6e"/><rect x="17" y="399" width="2" height="1.2" fill="#6e6e6e"/><rect x="22" y="399" width="5" height="1.2" fill="#6e6e6e"/><rect x="30" y="399" width="5" height="1.2" fill="#6e6e6e"/><rect x="38" y="399" width="5" height="1.2" fill="#6e6e6e"/><rect x="17" y="403" width="2" height="1.2" fill="#6e6e6e"/><rect x="22" y="403" width="5" height="1.2" fill="#6e6e6e"/><rect x="30" y="403" width="5" height="1.2" fill="#6e6e6e"/><rect x="38" y="403" width="5" height="1.2" fill="#6e6e6e"/><rect x="17" y="407" width="2" height="1.2" fill="#6e6e6e"/><rect x="22" y="407" width="5" height="1.2" fill="#6e6e6e"/><rect x="30" y="407" width="5" height="1.2" fill="#6e6e6e"/><rect x="38" y="407" width="5" height="1.2" fill="#6e6e6e"/><rect x="17" y="411" width="2" height="1.2" fill="#6e6e6e"/><rect x="22" y="411" width="5" height="1.2" fill="#6e6e6e"/><rect x="30" y="411" width="5" height="1.2" fill="#6e6e6e"/><rect x="38" y="411" width="5" height="1.2" fill="#6e6e6e"/><ellipse cx="72" cy="412" rx="10" ry="1.6" fill="#000" opacity="0.16" filter="url(#blur)"/><ellipse cx="108" cy="412" rx="10" ry="1.6" fill="#000" opacity="0.16" filter="url(#blur)"/><path d="M61.4 399.3L82.8 388.0V410.6Z" fill="#fff" stroke="#9a9a9a" stroke-width="1" stroke-linejoin="round"/><path d="M64.0 399.3L81.0 390.6V408.0Z" fill="url(#bl)" stroke="#0f5f94" stroke-width="0.8" stroke-linejoin="round"/><path d="M118.4 399.3L97.2 388.0V410.6Z" fill="#fff" stroke="#9a9a9a" stroke-width="1" stroke-linejoin="round"/><path d="M115.80000000000001 399.3L99.0 390.6V408.0Z" fill="url(#bl)" stroke="#0f5f94" stroke-width="0.8" stroke-linejoin="round"/><path d="M140 388.4H154.6L159.6 393.4V411.59999999999997H140Z" fill="url(#gpaper)" stroke="#c6c6c6" stroke-width="1" stroke-linejoin="round"/><path d="M154.6 388.4V393.4H159.6" fill="#fafafa" stroke="#c6c6c6" stroke-width="0.8" stroke-linejoin="round"/><rect x="184" y="387.4" width="4" height="2.5" rx="1" fill="#b0b0b0"/><path d="M177.2 393.9L177.6 410.4Q177.6 412.0 179.2 412.0H192.8Q194.4 412.0 194.4 410.4L194.8 393.9Z" fill="#bdbdbd"/><path d="M178 409.4Q178 412.0 179.5 412.0H192.5Q194 412.0 194 409.4Z" fill="#a8a8a8" opacity="0.6"/><rect x="176" y="389.4" width="20" height="4.6" rx="1.6" fill="#b4b4b4"/><rect x="180.35" y="397.4" width="1.3" height="10.6" rx="0.6" fill="#d6d6d6"/><rect x="185.35" y="397.4" width="1.3" height="10.6" rx="0.6" fill="#d6d6d6"/><rect x="190.35" y="397.4" width="1.3" height="10.6" rx="0.6" fill="#d6d6d6"/></svg>
<span class="t" id="t112" style="left:17.5px;top:425px;height:21px;line-height:21px;font-size:11.5px;color:#000;transform:scaleX(0.9197);">Varastopaikka</span>
<span class="t" id="t113" style="left:17.5px;top:450px;height:21px;line-height:21px;font-size:11.5px;color:#000;transform:scaleX(0.9241);">Varastosaldo</span>
<span class="t" id="t114" style="left:17.5px;top:474px;height:21px;line-height:21px;font-size:11.5px;color:#000;transform:scaleX(0.8910);">Tulossa</span>
<span class="t" id="t115" style="left:17.5px;top:499px;height:21px;line-height:21px;font-size:11.5px;color:#000;transform:scaleX(0.8945);">Menossa</span>
<span class="t" id="t116" style="left:17.5px;top:524px;height:21px;line-height:21px;font-size:11.5px;color:#000;transform:scaleX(0.9618);">Tuotanto</span>
<span class="t" id="t117" style="left:17.5px;top:548px;height:21px;line-height:21px;font-size:11.5px;color:#000;transform:scaleX(0.9656);">Tuotantovaraus</span>
<span class="t" id="t118" style="left:17.5px;top:573px;height:21px;line-height:21px;font-size:11.5px;color:#000;transform:scaleX(0.9668);">Hälytysraja</span>
<div style="left:103px;top:425px;width:100px;height:21px;background:#fff;border:1px solid #d2d2d2;box-sizing:border-box"></div>
<div style="left:106px;top:428px;width:77px;height:15px;background:#f0f0f0"></div>
<span class="t" id="t119" style="left:106px;top:425px;height:21px;line-height:21px;font-size:11.5px;color:#6d6d6d;transform:scaleX(0.9424);">01. Oletus</span>
<svg style="left:189px;top:433px" width="10" height="6" viewBox="0 0 10 6"><path d="M0.8 0.8L5 5l4.2-4.2" fill="none" stroke="#a0a0a0" stroke-width="1.1"/></svg>
<div style="left:103px;top:450px;width:100px;height:21px;background:#efefef;border:1px solid #8c8c8c;box-sizing:border-box"></div>
<span class="t" id="t120" style="left:106px;top:450px;height:21px;line-height:21px;font-size:11.5px;color:#6d6d6d;transform:scaleX(0.8741);">0</span>
<div style="left:103px;top:474px;width:100px;height:21px;background:#fff;border:1px solid #8c8c8c;box-sizing:border-box"></div>
<div style="left:106px;top:477px;width:95px;height:14px;background:#efefef"></div>
<span class="t" id="t121" style="left:106px;top:474px;height:21px;line-height:21px;font-size:11.5px;color:#6d6d6d;transform:scaleX(0.8741);">0</span>
<div style="left:103px;top:499px;width:100px;height:21px;background:#fff;border:1px solid #8c8c8c;box-sizing:border-box"></div>
<div style="left:106px;top:502px;width:95px;height:14px;background:#efefef"></div>
<span class="t" id="t122" style="left:106px;top:499px;height:21px;line-height:21px;font-size:11.5px;color:#6d6d6d;transform:scaleX(0.8741);">0</span>
<div style="left:103px;top:524px;width:100px;height:21px;background:#fff;border:1px solid #8c8c8c;box-sizing:border-box"></div>
<div style="left:106px;top:527px;width:95px;height:14px;background:#efefef"></div>
<span class="t" id="t123" style="left:106px;top:524px;height:21px;line-height:21px;font-size:11.5px;color:#6d6d6d;transform:scaleX(0.8741);">0</span>
<div style="left:103px;top:548px;width:100px;height:21px;background:#fff;border:1px solid #8c8c8c;box-sizing:border-box"></div>
<div style="left:106px;top:551px;width:95px;height:14px;background:#efefef"></div>
<span class="t" id="t124" style="left:106px;top:548px;height:21px;line-height:21px;font-size:11.5px;color:#6d6d6d;transform:scaleX(0.8741);">0</span>
<div style="left:103px;top:573px;width:100px;height:21px;background:#fff;border:1px solid #939393;box-sizing:border-box"></div>
<span class="t" id="t125" style="left:106px;top:573px;height:21px;line-height:21px;font-size:11.5px;color:#000;transform:scaleX(0.8741);">0</span>
<span class="t" id="t126" style="left:217.5px;top:425px;height:21px;line-height:21px;font-size:11.5px;color:#000;transform:scaleX(0.9216);">Hyllyosoite</span>
<span class="t" id="t127" style="left:218.5px;top:450px;height:21px;line-height:21px;font-size:11.5px;color:#000;transform:scaleX(0.9584);">Ed.tap.pvm</span>
<span class="t" id="t128" style="left:218.5px;top:474px;height:21px;line-height:21px;font-size:11.5px;color:#000;transform:scaleX(0.9299);">Ed.tulopvm</span>
<span class="t" id="t129" style="left:218.5px;top:499px;height:21px;line-height:21px;font-size:11.5px;color:#000;transform:scaleX(0.9584);">Ed.ottopvm</span>
<span class="t" id="t130" style="left:218.5px;top:524px;height:21px;line-height:21px;font-size:11.5px;color:#000;transform:scaleX(0.8905);">Keskihinta</span>
<span class="t" id="t131" style="left:218.5px;top:548px;height:21px;line-height:21px;font-size:11.5px;color:#000;transform:scaleX(0.7933);">KET</span>
<div style="left:321px;top:425px;width:100px;height:21px;background:#fff;border:1px solid #939393;box-sizing:border-box"></div>
<div style="left:402px;top:426px;width:18px;height:19px;background:#e1e1e1"></div>
<svg style="left:405px;top:429px" width="12" height="12" viewBox="0 0 13 13"><circle cx="5" cy="5" r="3.6" fill="none" stroke="#333" stroke-width="1.7"/><path d="M7.8 7.8L12 12" stroke="#333" stroke-width="1.9" stroke-linecap="round"/></svg>
<div style="left:321px;top:450px;width:100px;height:21px;background:#fff;border:1px solid #8c8c8c;box-sizing:border-box;overflow:hidden"></div>
<div style="left:324px;top:453px;width:95px;height:14px;background:#efefef"></div>
<div style="left:322px;top:451px;width:98px;height:19px;overflow:hidden">
<span class="t" id="t132" style="left:2px;top:-1px;height:21px;line-height:21px;font-size:11.5px;color:#6d6d6d;transform:scaleX(0.9786);">22.3.2023 14:45:00</span>
</div>
<div style="left:321px;top:474px;width:100px;height:21px;background:#fff;border:1px solid #8c8c8c;box-sizing:border-box"></div>
<div style="left:324px;top:477px;width:95px;height:14px;background:#efefef"></div>
<div style="left:321px;top:499px;width:100px;height:21px;background:#fff;border:1px solid #8c8c8c;box-sizing:border-box"></div>
<div style="left:324px;top:502px;width:95px;height:14px;background:#efefef"></div>
<div style="left:321px;top:524px;width:100px;height:21px;background:#fff;border:1px solid #939393;box-sizing:border-box"></div>
<span class="t" id="t133" style="left:324px;top:524px;height:21px;line-height:21px;font-size:11.5px;color:#000;transform:scaleX(0.8741);">0</span>
<div style="left:321px;top:548px;width:100px;height:21px;background:#fff;border:1px solid #939393;box-sizing:border-box"></div>
<div style="left:402px;top:549px;width:18px;height:19px;background:#e1e1e1"></div>
<svg style="left:405px;top:552px" width="12" height="12" viewBox="0 0 13 13"><circle cx="5" cy="5" r="3.6" fill="none" stroke="#333" stroke-width="1.7"/><path d="M7.8 7.8L12 12" stroke="#333" stroke-width="1.9" stroke-linecap="round"/></svg>
<div style="left:218px;top:576px;width:13px;height:13px;background:#fff;border:1px solid #cbcbcb;box-sizing:border-box"></div>
<span class="t" id="t134" style="left:237px;top:572.6px;height:21px;line-height:21px;font-size:11.5px;color:#636363;transform:scaleX(0.8950);letter-spacing:0.3px;">Oletusvarasto</span>
<div style="left:321px;top:576px;width:13px;height:13px;background:#fff;border:1px solid #cbcbcb;box-sizing:border-box"></div>
<span class="t" id="t135" style="left:340px;top:572.6px;height:21px;line-height:21px;font-size:11.5px;color:#636363;transform:scaleX(0.8785);letter-spacing:0.3px;">Passiivinen</span>
<div style="left:11px;top:632px;width:445px;height:150px;border:1px solid #dcdcdc;box-sizing:border-box"></div>
<div style="left:14px;top:626px;width:48px;height:14px;background:#f0f0f0"></div>
<span class="t" id="t136" style="left:15.8px;top:622.2px;height:21px;line-height:21px;font-size:11.5px;color:#000080;transform:scaleX(0.9095);">Lisäteksti</span>
<div style="left:20px;top:642px;width:420px;height:140px;background:#fff;border:1px solid #8c8c8c;box-sizing:border-box"></div>
<div style="left:423px;top:643px;width:16px;height:130px;background:#f0f0f0"></div>
<svg style="left:426px;top:649px" width="10" height="6" viewBox="0 0 10 6"><path d="M0.8 5.2L5 1l4.2 4.2" fill="none" stroke="#b5b5b5" stroke-width="1.4"/></svg>
<div style="left:467px;top:632px;width:451px;height:150px;border:1px solid #dcdcdc;box-sizing:border-box"></div>
<div style="left:470px;top:626px;width:100px;height:14px;background:#f0f0f0"></div>
<span class="t" id="t137" style="left:470.8px;top:622.2px;height:21px;line-height:21px;font-size:11.5px;color:#000;transform:scaleX(0.9503);">Vaihtoehtokoodit (1)</span>
<div style="left:473px;top:642px;width:433px;height:131px;background:#c0c0c0"></div>
<div style="left:473px;top:642px;width:433px;height:1px;background:#a0a0a0"></div>
<div style="left:473px;top:642px;width:1px;height:131px;background:#a0a0a0"></div>
<div style="left:474px;top:643px;width:432px;height:1px;background:#696969"></div>
<div style="left:474px;top:643px;width:1px;height:130px;background:#696969"></div>
<div style="left:475px;top:644px;width:430px;height:15px;background:#dadada"></div>
<div style="left:475px;top:644px;width:430px;height:1px;background:#fff"></div>
<div style="left:475px;top:644px;width:36px;height:15px;background:#f0f0f0;border-top:1px solid #fff;border-left:1px solid #fff;box-sizing:border-box"></div>
<div style="left:510px;top:645px;width:1px;height:14px;background:#f8f8f8"></div>
<div style="left:475px;top:644px;width:430px;height:15px;overflow:hidden">
<span class="t" id="t138" style="left:38.799999999999955px;top:-2.5px;height:21px;line-height:21px;font-size:11.5px;color:#000;transform:scaleX(0.9309);">Vaihtoehtokoodi</span>
<span class="t" id="t139" style="left:142.29999999999995px;top:-2.5px;height:21px;line-height:21px;font-size:11.5px;color:#000;transform:scaleX(0.9407);">Toimittaja / Asiakas</span>
<span class="t" id="t140" style="left:244.39999999999998px;top:-2.5px;height:21px;line-height:21px;font-size:11.5px;color:#000;transform:scaleX(0.8241);">Kdi</span>
<span class="t" id="t141" style="left:347.79999999999995px;top:-2.5px;height:21px;line-height:21px;font-size:11.5px;color:#000;transform:scaleX(0.9150);">Ovh</span>
</div>
<div style="left:511px;top:644px;width:1px;height:15px;background:#111"></div>
<div style="left:512px;top:645px;width:1px;height:14px;background:#fff"></div>
<div style="left:614px;top:644px;width:1px;height:15px;background:#111"></div>
<div style="left:615px;top:645px;width:1px;height:14px;background:#fff"></div>
<div style="left:717px;top:644px;width:1px;height:15px;background:#111"></div>
<div style="left:718px;top:645px;width:1px;height:14px;background:#fff"></div>
<div style="left:820px;top:644px;width:1px;height:15px;background:#111"></div>
<div style="left:821px;top:645px;width:1px;height:14px;background:#fff"></div>
<div style="left:475px;top:659px;width:430px;height:1px;background:#111"></div>
<div style="left:905px;top:644px;width:1px;height:61px;background:#fff"></div>
<div style="left:512px;top:660px;width:393px;height:14px;background:#d0e5fa"></div>
<div style="left:512px;top:675px;width:393px;height:14px;background:#fff"></div>
<div style="left:512px;top:690px;width:393px;height:14px;background:#f8f8f8"></div>
<div style="left:512px;top:674px;width:393px;height:1px;background:#c6c6c6"></div>
<div style="left:512px;top:689px;width:393px;height:1px;background:#c6c6c6"></div>
<div style="left:512px;top:704px;width:393px;height:1px;background:#c6c6c6"></div>
<div style="left:614px;top:660px;width:1px;height:45px;background:#b8b8b8"></div>
<div style="left:717px;top:660px;width:1px;height:45px;background:#b8b8b8"></div>
<div style="left:820px;top:660px;width:1px;height:45px;background:#b8b8b8"></div>
<div style="left:475px;top:660px;width:36px;height:14px;background:#f0f0f0;border-top:1px solid #fff;border-left:1px solid #fff;box-sizing:border-box"></div>
<div style="left:510px;top:661px;width:1px;height:13px;background:#f8f8f8"></div>
<div style="left:475px;top:675px;width:36px;height:14px;background:#f0f0f0;border-top:1px solid #fff;border-left:1px solid #fff;box-sizing:border-box"></div>
<div style="left:510px;top:676px;width:1px;height:13px;background:#f8f8f8"></div>
<div style="left:475px;top:690px;width:36px;height:14px;background:#f0f0f0;border-top:1px solid #fff;border-left:1px solid #fff;box-sizing:border-box"></div>
<div style="left:510px;top:691px;width:1px;height:13px;background:#f8f8f8"></div>
<div style="left:475px;top:674px;width:37px;height:1px;background:#111"></div>
<div style="left:475px;top:689px;width:37px;height:1px;background:#111"></div>
<div style="left:475px;top:704px;width:37px;height:1px;background:#111"></div>
<div style="left:511px;top:659px;width:1px;height:46px;background:#111"></div>
<div style="left:512px;top:660px;width:103px;height:14px;border:1px solid #000;box-sizing:border-box;background:#d0e5fa"></div>
<span class="t" id="t142" style="left:513.8px;top:656.5px;height:21px;line-height:21px;font-size:11.5px;color:#000;transform:scaleX(0.8636);">VKOODI_AS</span>
<span class="t" id="t143" style="left:617.6px;top:656.5px;height:21px;line-height:21px;font-size:11.5px;color:#000;transform:scaleX(0.9723);">111</span>
<span class="t" id="t144" style="left:721px;top:656.5px;height:21px;line-height:21px;font-size:11.5px;color:#000;transform:scaleX(0.7024);">1</span>
<svg style="left:490.5px;top:661.6px" width="8" height="12" viewBox="0 0 8 12"><path d="M0.3 0.2L6.8 5.9 0.3 11.6z" fill="#000"/></svg>
<svg style="left:488px;top:692px" width="11" height="11" viewBox="0 0 11 11"><path d="M5.5 1v9M1 5.5h9M2.3 2.3l6.4 6.4M8.7 2.3L2.3 8.7" stroke="#000" stroke-width="1"/></svg>
<div style="left:496px;top:654.2px;width:238px;height:24.6px;border:3px solid #f80008;box-sizing:border-box;border-radius:1px"></div>
<div style="left:918px;top:66px;width:1px;height:707px;background:#fff"></div>
<div style="left:919px;top:66px;width:15px;height:707px;background:#f0f0f0"></div>
<div style="left:919px;top:83px;width:15px;height:616px;background:#cdcdcd"></div>
<div style="left:919px;top:699px;width:15px;height:57px;background:#fff"></div>
<svg style="left:922px;top:71px" width="10" height="7" viewBox="0 0 10 7"><path d="M1 6L5 2l4 4" fill="none" stroke="#555" stroke-width="1.8"/></svg>
<svg style="left:922px;top:762px" width="10" height="7" viewBox="0 0 10 7"><path d="M1 1l4 4 4-4" fill="none" stroke="#555" stroke-width="1.8"/></svg>
<div style="left:3px;top:773px;width:931px;height:25px;background:linear-gradient(90deg,#006098,#0078be)"></div>
<span class="t" id="t145" style="left:7.7px;top:773px;height:25px;line-height:25px;font-size:13.5px;color:#fff;transform:scaleX(0.9175);">Varastokirjanpito 10.5.266</span>
<div style="left:158px;top:775px;width:1px;height:21px;background:#004a7c"></div>
<div style="left:706px;top:775px;width:1px;height:21px;background:#004a7c"></div>
<div style="left:757px;top:775px;width:1px;height:21px;background:#004a7c"></div>
<div style="left:828px;top:775px;width:1px;height:21px;background:#004a7c"></div>
<span class="t" id="t146" style="left:713px;top:773px;height:25px;line-height:25px;font-size:13.5px;color:#fff;transform:scaleX(0.7810);">ADMSS</span>
<span class="t" id="t147" style="left:765px;top:773px;height:25px;line-height:25px;font-size:13.5px;color:#fff;transform:scaleX(0.9224);">22.3.2023</span>
<span class="t" id="t148" style="left:834.8px;top:773px;height:25px;line-height:25px;font-size:13.5px;color:#fff;transform:scaleX(0.9086);">© Visma 2023</span>
<div style="left:0px;top:798px;width:935px;height:3px;background:#fff"></div>
<div style="left:3px;top:799px;width:408px;height:1px;background:repeating-linear-gradient(90deg,#e2e2e2 0 2px,#fff 2px 4px)"></div>
<div style="left:431px;top:798px;width:40px;height:3px;background:#8c8286"></div>
<div style="left:921px;top:799px;width:14px;height:2px;background:#d5dde8"></div>
</div></body></html>
